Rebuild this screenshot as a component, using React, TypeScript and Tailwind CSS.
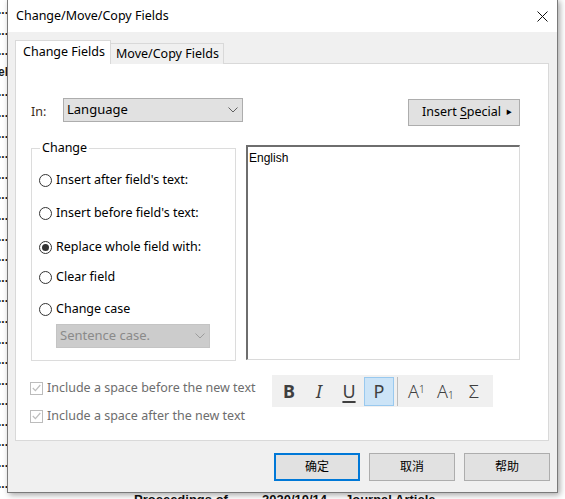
import { useState } from "react";

const ui = "font-['Noto_Sans','Noto_Sans_CJK_SC',sans-serif]";

const backdropTails = [
  "Journal...", "Conferen...", "Journal...", "Articel", "Journal...", "Book Sec...", "Proceedi...",
  "Journal...", "Journal...", "Conferen...", "Journal...", "Book...", "Journal...", "Proceedi...",
  "Journal...", "Journal...", "Journal Al...", "Journal Al...", "Conferen...", "Journal...",
  "Journal...", "Journal...", "Journal...", "Journal...",
];

const radios = [
  { label: "Insert after field's text:", mt: "mt-[18px]" },
  { label: "Insert before field's text:", mt: "mt-[17px]" },
  { label: "Replace whole field with:", mt: "mt-[18px]" },
  { label: "Clear field", mt: "mt-[14px]" },
  { label: "Change case", mt: "mt-[16px]" },
];

function Chevron({ color }: { color: string }) {
  return (
    <svg width="10" height="6" viewBox="0 0 10 6" className="shrink-0">
      <path d="M0.5 0.5 L5 5 L9.5 0.5" fill="none" stroke={color} strokeWidth="1" />
    </svg>
  );
}

function Radio({ label, checked, onClick }: { label: string; checked: boolean; onClick: () => void }) {
  return (
    <div className="flex items-center h-[16px] cursor-default" onClick={onClick}>
      <div className="w-[13px] h-[13px] rounded-full border border-[#333] bg-white flex items-center justify-center">
        {checked && <div className="w-[7px] h-[7px] rounded-full bg-[#333]" />}
      </div>
      <span className="ml-[4px] text-[12.5px] text-black leading-none">{label}</span>
    </div>
  );
}

function DisabledCheck({ label }: { label: string }) {
  return (
    <div className="flex items-center h-[14px]">
      <div className="w-[13px] h-[13px] border border-[#bcbcbc] bg-white flex items-center justify-center">
        <svg width="9" height="8" viewBox="0 0 9 8">
          <path d="M0.8 4 L3.4 6.6 L8.3 1" fill="none" stroke="#bdbdbd" strokeWidth="1.2" />
        </svg>
      </div>
      <span className="ml-[4px] text-[12.5px] text-[#6d6d6d] leading-none">{label}</span>
    </div>
  );
}

function ToolButton({ children, active, w = "w-[30px]" }: { children: React.ReactNode; active?: boolean; w?: string }) {
  return (
    <div
      className={`${w} h-[29px] flex items-center justify-center text-[#3f3f3f] ${
        active ? "bg-[#cce4f7] border border-[#99c9ef]" : ""
      }`}
    >
      {children}
    </div>
  );
}

export default function App() {
  const [choice, setChoice] = useState(2);

  return (
    <div className={`relative w-[565px] h-[499px] overflow-hidden bg-white ${ui}`}>
      {/* what lies behind the dialog */}
      <div className="absolute left-[-62px] top-[0px] w-[70px] flex flex-col items-end font-['Liberation_Sans',sans-serif] text-[12px] font-bold text-[#1a1a1a]">
        {backdropTails.map((t, i) => (
          <div key={i} className="h-[20.6px] leading-[20px] whitespace-nowrap">{t}</div>
        ))}
      </div>
      <div className="absolute left-[134px] top-[490px] flex font-['Liberation_Sans',sans-serif] text-[13px] font-bold text-[#111] whitespace-nowrap">
        <span className="w-[128px]">Proceedings of</span>
        <span className="w-[83px]">2020/10/14</span>
        <span>Journal Article</span>
      </div>

      {/* dialog window */}
      <div className="absolute left-[7px] top-[-1px] w-[551px] h-[494px] border border-[#7a7a7a] bg-[#f0f0f0] flex flex-col shadow-[2px_2px_6px_rgba(0,0,0,0.35)]">
        <div className="h-[32px] bg-white flex items-center justify-between pl-[8px] pr-[9px] shrink-0">
          <span className="text-[12.5px] text-black mt-[1px]">Change/Move/Copy Fields</span>
          <svg width="11" height="11" viewBox="0 0 11 11" className="mt-[1px]">
            <path d="M0.5 0.5 L10.5 10.5 M10.5 0.5 L0.5 10.5" stroke="#111" strokeWidth="1" />
          </svg>
        </div>

        <div className="flex-1 flex flex-col pl-[7px] pr-[8px] pt-[8px]">
          {/* tabs */}
          <div className="flex items-end h-[24px] relative z-10">
            <div className="w-[96px] h-[24px] bg-white border border-[#d9d9d9] border-b-0 flex items-start pl-[7px] pt-[2px] text-[12.5px] text-black">
              Change Fields
            </div>
            <div className="w-[113px] h-[21px] bg-[#f0f0f0] border border-[#d9d9d9] border-l-0 border-b-0 flex items-start pl-[5px] pt-[1px] text-[12.5px] text-black">
              Move/Copy Fields
            </div>
          </div>

          {/* panel */}
          <div className="h-[378px] mt-[-1px] bg-white border border-[#d9d9d9] flex flex-col pl-[15px] pr-[28px] pt-[34px]">
            <div className="flex items-start">
              <span className="mt-[5px] text-[12.5px] text-[#3d2b19] w-[32px]">In:</span>
              <div className="w-[180px] h-[24px] bg-[#e1e1e1] border border-[#adadad] flex items-center justify-between pl-[3px] pr-[4px]">
                <span className="text-[13px] text-black">Language</span>
                <Chevron color="#606060" />
              </div>
              <div className="ml-auto mt-[1px] w-[112px] h-[27px] bg-[#e1e1e1] border border-[#adadad] flex items-center justify-end pr-[7px] text-[12.5px] text-black">
                <span>
                  Insert <span className="underline underline-offset-2">S</span>pecial
                </span>
                <span className="ml-[5px] text-[6px]">▶</span>
              </div>
            </div>

            <div className="flex mt-[19px] items-start">
              <fieldset className="w-[205px] h-[219px] border border-[#dcdcdc] px-[7px] -mt-[3px]">
                <legend className="ml-[1px] px-[2px] text-[12.5px] text-black leading-[12px]">Change</legend>
                {radios.map((r, i) => (
                  <div key={i} className={r.mt}>
                    <Radio label={r.label} checked={choice === i} onClick={() => setChoice(i)} />
                  </div>
                ))}
                <div className="ml-[17px] mt-[7px] w-[154px] h-[24px] bg-[#cccccc] border border-[#c4c4c4] flex items-center justify-between pl-[3px] pr-[4px]">
                  <span className="text-[13px] text-[#8a8a8a]">Sentence case.</span>
                  <Chevron color="#9c9c9c" />
                </div>
              </fieldset>
              <div className="ml-[10px] w-[274px] h-[215px] bg-white border-t-2 border-l-2 border-[#6e6e6e] border-r border-r-[#dadada] border-b border-b-[#dadada] pl-[1px] pt-[2px] font-['Liberation_Sans',sans-serif] text-[12px] text-black">
                English
              </div>
            </div>

            <div className="flex mt-[14px]">
              <div className="w-[242px] -ml-[1px] flex flex-col pt-[6px]">
                <DisabledCheck label="Include a space before the new text" />
                <div className="mt-[14px]">
                  <DisabledCheck label="Include a space after the new text" />
                </div>
              </div>
              <div className="w-[221px] h-[32px] bg-[#f0f0f0] flex items-center pl-[2px]">
                <ToolButton>
                  <span className="text-[18px] font-bold">B</span>
                </ToolButton>
                <ToolButton>
                  <span className="text-[18px] italic">I</span>
                </ToolButton>
                <ToolButton>
                  <span className="text-[18px] underline underline-offset-[3px] decoration-[1.5px]">U</span>
                </ToolButton>
                <ToolButton active>
                  <span className="text-[18px]">P</span>
                </ToolButton>
                <div className="w-[1px] h-[29px] bg-[#bdbdbd] mx-[3px]" />
                <ToolButton w="w-[31px]">
                  <span className="text-[18px] font-light">A</span>
                  <span className="text-[11px] font-light self-start mt-[4px]">1</span>
                </ToolButton>
                <ToolButton w="w-[27px]">
                  <span className="text-[18px] font-light">A</span>
                  <span className="text-[11px] font-light self-end mb-[2px]">1</span>
                </ToolButton>
                <ToolButton w="w-[30px]">
                  <span className="text-[18px] font-light">Σ</span>
                </ToolButton>
              </div>
            </div>
          </div>

          {/* buttons */}
          <div className="flex justify-end gap-[9px] mt-[12px] mr-[-1px]">
            <div className="w-[86px] h-[28px] bg-[#e1e1e1] border-2 border-[#0078d7] flex items-center justify-center text-[12px] text-black">
              确定
            </div>
            <div className="w-[86px] h-[28px] bg-[#e1e1e1] border border-[#adadad] flex items-center justify-center text-[12px] text-black">
              取消
            </div>
            <div className="w-[86px] h-[28px] bg-[#e1e1e1] border border-[#adadad] flex items-center justify-center text-[12px] text-black">
              帮助
            </div>
          </div>
        </div>
      </div>
    </div>
  );
}
